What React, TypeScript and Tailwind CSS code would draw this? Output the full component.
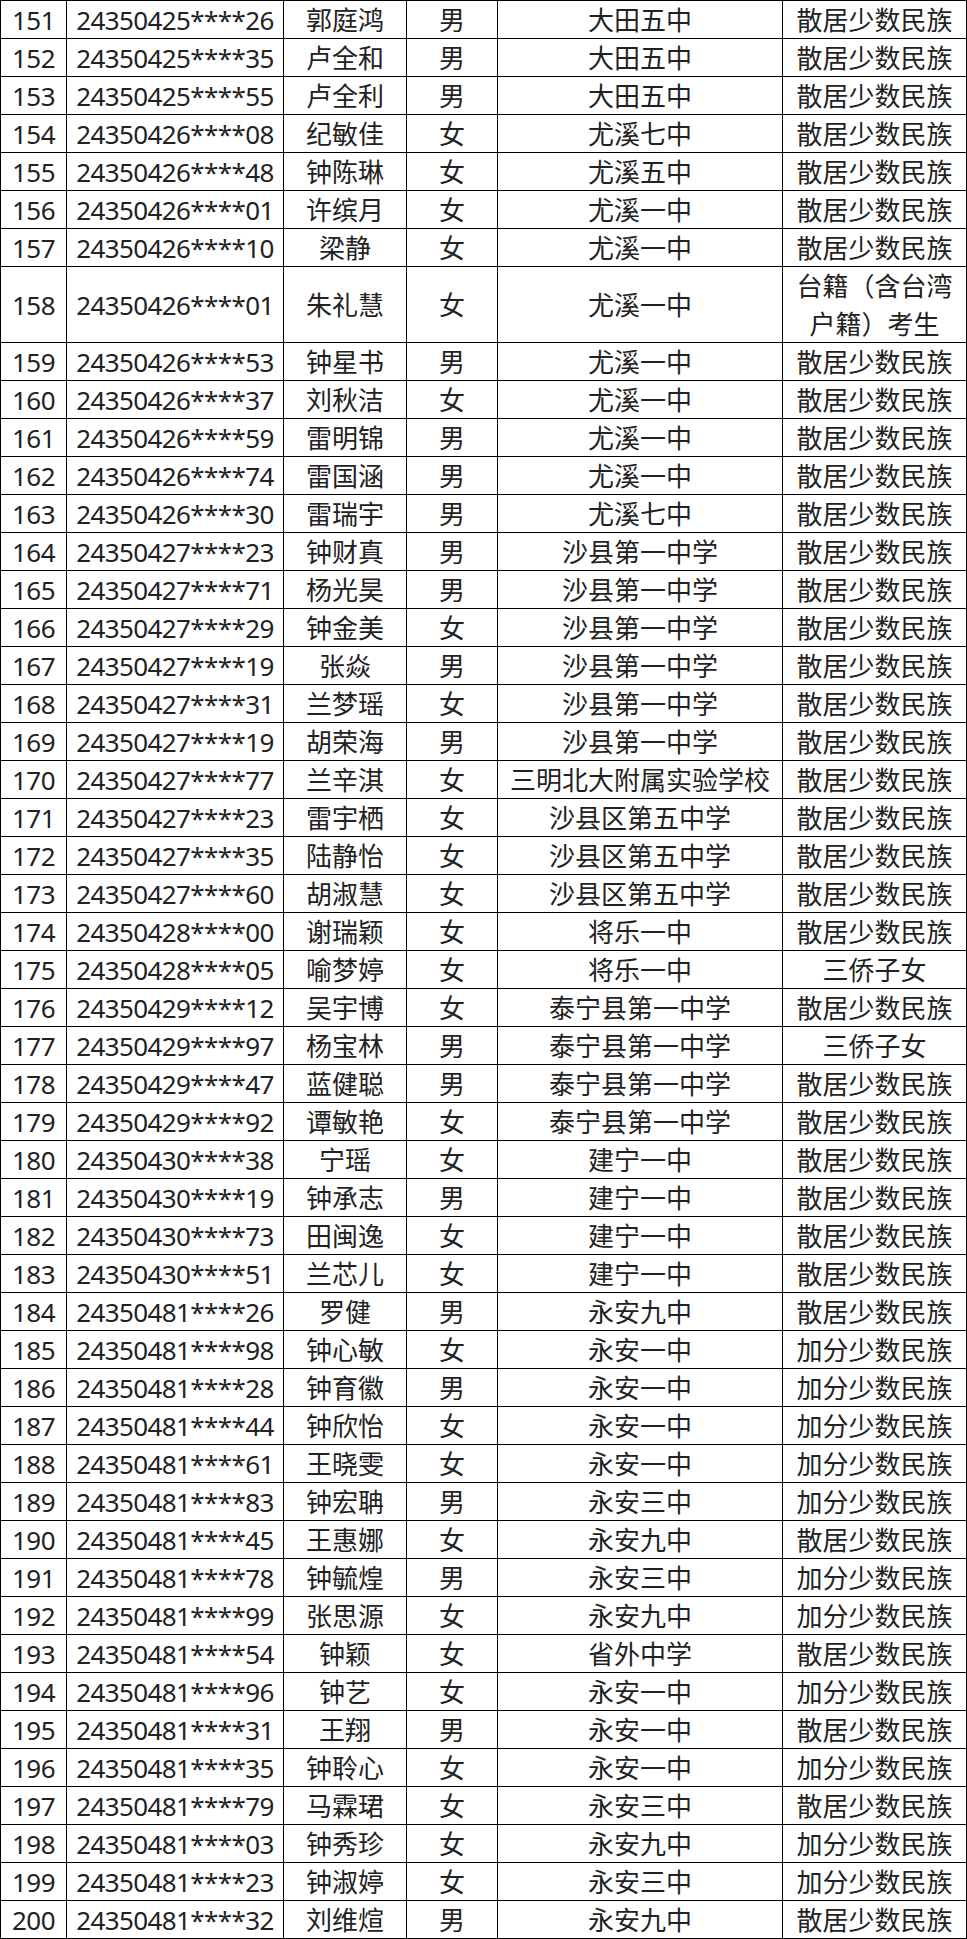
import React from "react";

type Row = [string, string, string, string, string, string];

const rows: Row[] = [
  ["151", "24350425****26", "郭庭鸿", "男", "大田五中", "散居少数民族"],
  ["152", "24350425****35", "卢全和", "男", "大田五中", "散居少数民族"],
  ["153", "24350425****55", "卢全利", "男", "大田五中", "散居少数民族"],
  ["154", "24350426****08", "纪敏佳", "女", "尤溪七中", "散居少数民族"],
  ["155", "24350426****48", "钟陈琳", "女", "尤溪五中", "散居少数民族"],
  ["156", "24350426****01", "许缤月", "女", "尤溪一中", "散居少数民族"],
  ["157", "24350426****10", "梁静", "女", "尤溪一中", "散居少数民族"],
  ["158", "24350426****01", "朱礼慧", "女", "尤溪一中", "台籍（含台湾\n户籍）考生"],
  ["159", "24350426****53", "钟星书", "男", "尤溪一中", "散居少数民族"],
  ["160", "24350426****37", "刘秋洁", "女", "尤溪一中", "散居少数民族"],
  ["161", "24350426****59", "雷明锦", "男", "尤溪一中", "散居少数民族"],
  ["162", "24350426****74", "雷国涵", "男", "尤溪一中", "散居少数民族"],
  ["163", "24350426****30", "雷瑞宇", "男", "尤溪七中", "散居少数民族"],
  ["164", "24350427****23", "钟财真", "男", "沙县第一中学", "散居少数民族"],
  ["165", "24350427****71", "杨光昊", "男", "沙县第一中学", "散居少数民族"],
  ["166", "24350427****29", "钟金美", "女", "沙县第一中学", "散居少数民族"],
  ["167", "24350427****19", "张焱", "男", "沙县第一中学", "散居少数民族"],
  ["168", "24350427****31", "兰梦瑶", "女", "沙县第一中学", "散居少数民族"],
  ["169", "24350427****19", "胡荣海", "男", "沙县第一中学", "散居少数民族"],
  ["170", "24350427****77", "兰辛淇", "女", "三明北大附属实验学校", "散居少数民族"],
  ["171", "24350427****23", "雷宇栖", "女", "沙县区第五中学", "散居少数民族"],
  ["172", "24350427****35", "陆静怡", "女", "沙县区第五中学", "散居少数民族"],
  ["173", "24350427****60", "胡淑慧", "女", "沙县区第五中学", "散居少数民族"],
  ["174", "24350428****00", "谢瑞颖", "女", "将乐一中", "散居少数民族"],
  ["175", "24350428****05", "喻梦婷", "女", "将乐一中", "三侨子女"],
  ["176", "24350429****12", "吴宇博", "女", "泰宁县第一中学", "散居少数民族"],
  ["177", "24350429****97", "杨宝林", "男", "泰宁县第一中学", "三侨子女"],
  ["178", "24350429****47", "蓝健聪", "男", "泰宁县第一中学", "散居少数民族"],
  ["179", "24350429****92", "谭敏艳", "女", "泰宁县第一中学", "散居少数民族"],
  ["180", "24350430****38", "宁瑶", "女", "建宁一中", "散居少数民族"],
  ["181", "24350430****19", "钟承志", "男", "建宁一中", "散居少数民族"],
  ["182", "24350430****73", "田闽逸", "女", "建宁一中", "散居少数民族"],
  ["183", "24350430****51", "兰芯儿", "女", "建宁一中", "散居少数民族"],
  ["184", "24350481****26", "罗健", "男", "永安九中", "散居少数民族"],
  ["185", "24350481****98", "钟心敏", "女", "永安一中", "加分少数民族"],
  ["186", "24350481****28", "钟育徽", "男", "永安一中", "加分少数民族"],
  ["187", "24350481****44", "钟欣怡", "女", "永安一中", "加分少数民族"],
  ["188", "24350481****61", "王晓雯", "女", "永安一中", "加分少数民族"],
  ["189", "24350481****83", "钟宏聃", "男", "永安三中", "加分少数民族"],
  ["190", "24350481****45", "王惠娜", "女", "永安九中", "散居少数民族"],
  ["191", "24350481****78", "钟毓煌", "男", "永安三中", "加分少数民族"],
  ["192", "24350481****99", "张思源", "女", "永安九中", "加分少数民族"],
  ["193", "24350481****54", "钟颖", "女", "省外中学", "散居少数民族"],
  ["194", "24350481****96", "钟艺", "女", "永安一中", "加分少数民族"],
  ["195", "24350481****31", "王翔", "男", "永安一中", "散居少数民族"],
  ["196", "24350481****35", "钟聆心", "女", "永安一中", "加分少数民族"],
  ["197", "24350481****79", "马霖珺", "女", "永安三中", "散居少数民族"],
  ["198", "24350481****03", "钟秀珍", "女", "永安九中", "加分少数民族"],
  ["199", "24350481****23", "钟淑婷", "女", "永安三中", "加分少数民族"],
  ["200", "24350481****32", "刘维煊", "男", "永安九中", "散居少数民族"],
];

// widths include each cell's right border
const colClass = [
  "w-[66px] tracking-[-0.5px]",
  "w-[217px] tracking-[-0.6px]",
  "w-[123px]",
  "w-[91px]",
  "w-[285px]",
  "w-[184px]",
];

export default function App() {
  return (
    <div
      className="w-[967px] bg-white text-[#222] text-[26px] leading-[38px]"
      style={{ fontFamily: '"Noto Sans", "Noto Sans CJK SC", sans-serif' }}
    >
      <div className="border-t border-l border-black">
        {rows.map((r) => {
          const tall = r[5].includes("\n");
          return (
            <div key={r[0]} className="flex">
              {r.map((cell, i) => (
                <div
                  key={i}
                  className={`${colClass[i]} ${tall ? "h-[76px]" : "h-[38px]"} shrink-0 border-r border-b border-black flex items-center justify-center text-center whitespace-pre-line overflow-hidden`}
                >
                  {cell}
                </div>
              ))}
            </div>
          );
        })}
      </div>
    </div>
  );
}
